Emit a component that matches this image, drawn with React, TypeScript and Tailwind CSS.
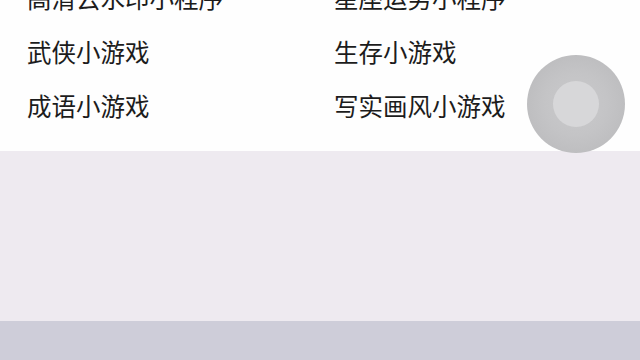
import React from "react";

const items = [
    "高清云水印小程序",
    "星座运势小程序",
    "武侠小游戏",
    "生存小游戏",
    "成语小游戏",
    "写实画风小游戏",
];

export default function App() {
    return (
        <div
            className="relative w-[640px] h-[360px] overflow-hidden flex flex-col bg-white"
            style={{ fontFamily: '"Noto Sans CJK SC", "Noto Sans", sans-serif' }}
        >
            <div className="h-[151px] shrink-0 overflow-hidden bg-[#fefefe]">
                <div className="grid grid-cols-[307px_1fr] mt-[-29px] pl-[27px]">
                    {items.map((t) => (
                        <div key={t} className="h-[54px] flex items-center text-[24.5px] leading-none text-[#1c1c1c]">
                            {t}
                        </div>
                    ))}
                </div>
            </div>
            <div className="flex-1 bg-[#eeeaf0]" />
            <div className="h-[39px] shrink-0 bg-[#cecdd9]" />

            {/* floating assistive button */}
            <div className="absolute left-[527px] top-[55px] w-[98px] h-[98px] rounded-full flex items-center justify-center bg-[radial-gradient(circle,#cacacc_0%,#c4c4c6_45%,#bdbdbf_75%,#b8b8ba_100%)]">
                <div className="w-[46px] h-[46px] rounded-full bg-[#d7d7d9]" />
            </div>
        </div>
    );
}
